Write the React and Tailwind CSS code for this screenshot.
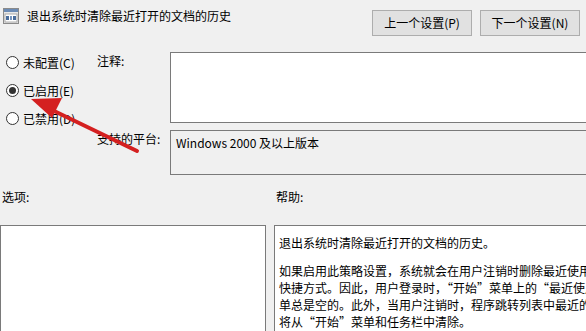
import React from "react";

const Radio = ({ label, checked }) => (
    <div className="flex items-center h-[28px]">
        <span className="w-[13px] h-[13px] rounded-full border border-[#333] bg-white flex items-center justify-center ml-[6px] mr-[4px]">
            {checked && <span className="w-[7px] h-[7px] rounded-full bg-[#333]" />}
        </span>
        <span>{label}</span>
    </div>
);

const Btn = ({ children }) => (
    <button className="w-[100px] h-[26px] bg-[#e1e1e1] border border-[#adadad] text-[12px] text-black leading-none">
        {children}
    </button>
);

const App = () => {
    return (
        <div
            className="w-[586px] h-[331px] bg-[#f0f0f0] overflow-hidden relative text-[12px] leading-[17px] text-black"
            style={{ fontFamily: '"Noto Sans CJK SC", "Noto Sans", sans-serif' }}
        >
            {/* HEADER */}
            <div className="h-[52px] flex justify-between">
                <div className="flex items-start pt-[8px] pl-[3px]">
                    <svg width="16" height="16" viewBox="0 0 16 16" className="mr-[8px]">
                        <rect x="0.5" y="0.5" width="15" height="15" fill="#e8e8e8" stroke="#8a8a8a" />
                        <rect x="1" y="1" width="14" height="3" fill="#6b8bb5" />
                        <rect x="2" y="6" width="12" height="8" fill="#fff" stroke="#9a9a9a" strokeWidth="0.8" />
                        <rect x="3" y="8" width="3" height="4" fill="#4a6d9c" />
                        <rect x="7" y="8" width="2" height="4" fill="#7a98c0" />
                        <rect x="10" y="8" width="3" height="4" fill="#4a6d9c" />
                    </svg>
                    <span className="-mt-[1px]">退出系统时清除最近打开的文档的历史</span>
                </div>
                <div className="flex gap-[8px] pt-[10px] pr-[6px]">
                    <Btn>上一个设置(P)</Btn>
                    <Btn>下一个设置(N)</Btn>
                </div>
            </div>

            {/* SETTINGS */}
            <div className="flex">
                <div className="w-[97px] shrink-0 -mt-[4px]">
                    <Radio label="未配置(C)" />
                    <Radio label="已启用(E)" checked />
                    <Radio label="已禁用(D)" />
                </div>
                <div className="flex-1 min-w-0 flex flex-col gap-[7px]">
                    <div className="flex">
                        <div className="w-[73px] shrink-0">注释:</div>
                        <div className="flex-1 h-[71px] bg-white border border-[#7a7a7a] border-r-0" />
                    </div>
                    <div className="flex">
                        <div className="w-[73px] shrink-0">支持的平台:</div>
                        <div className="flex-1 h-[45px] border border-[#7a7a7a] border-r-0 pl-[5px] pt-[3px]">
                            Windows 2000 及以上版本
                        </div>
                    </div>
                </div>
            </div>

            {/* OPTIONS / HELP */}
            <div className="flex gap-[8px] pt-[13px]">
                <div className="w-[266px] shrink-0 flex flex-col">
                    <div className="pl-[2px] h-[37px]">选项:</div>
                    <div className="h-[120px] bg-white border border-[#7a7a7a]" />
                </div>
                <div className="flex-1 min-w-0 flex flex-col">
                    <div className="pl-[2px] h-[37px]">帮助:</div>
                    <div className="h-[120px] bg-white border border-[#7a7a7a] border-r-0 pl-[4px] pt-[8px] whitespace-nowrap overflow-hidden">
                        <div>退出系统时清除最近打开的文档的历史。</div>
                        <div className="mt-[11px]">如果启用此策略设置，系统就会在用户注销时删除最近使用的文档文件的</div>
                        <div>快捷方式。因此，用户登录时，“开始”菜单上的“最近使用的项目”菜</div>
                        <div>单总是空的。此外，当用户注销时，程序跳转列表中最近的和固定的项目</div>
                        <div>将从“开始”菜单和任务栏中清除。</div>
                    </div>
                </div>
            </div>

            {/* RED ARROW */}
            <svg className="absolute left-0 top-0 pointer-events-none" width="586" height="331">
                <line x1="137" y1="151" x2="50" y2="109" stroke="#d42020" strokeWidth="4" strokeLinecap="round" />
                <polygon points="31,99 62,98 52,118" fill="#d42020" />
            </svg>
        </div>
    );
};

export default App;
